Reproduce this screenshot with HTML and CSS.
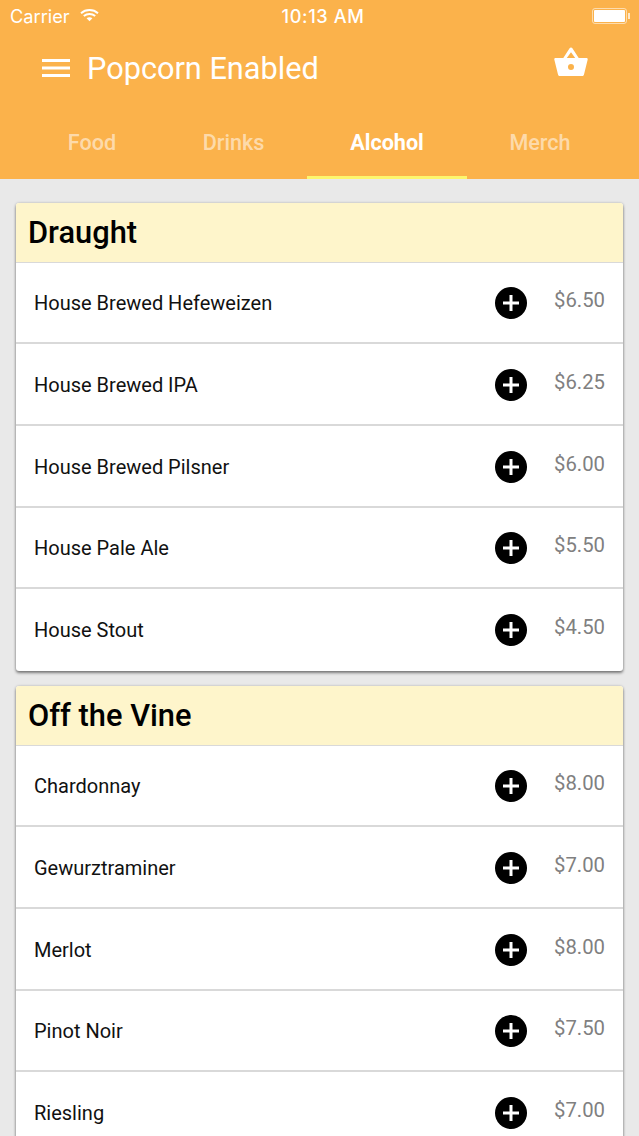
FILE: index.html
```html
<!DOCTYPE html>
<html lang="en">
<head>
<meta charset="utf-8">
<title>Popcorn Enabled</title>
<link rel="stylesheet" href="styles.css">
</head>
<body>
<div class="screen">
  <header class="top">
    <div class="status">
      <div class="status-left">
        <span>Carrier</span>
        <svg class="wifi" width="19" height="14" viewBox="0 0 19 14"><path fill="none" stroke="#fff" stroke-width="2" d="M1 5.200C5.800.9 13.200.9 18 5.200M3.800 8C7 5.300 12 5.300 15.200 8"/><path fill="#fff" d="M6.600 10.300c1.700-1.300 4.100-1.300 5.800 0L9.500 13.300z"/></svg>
      </div>
      <span class="clock">10:13 AM</span>
      <div class="battery"><span class="battery-body"><span class="battery-fill"></span></span><span class="battery-tip"></span></div>
    </div>
    <div class="toolbar">
      <div class="toolbar-left">
        <svg class="menu" width="28" height="18" viewBox="0 0 28 18"><path fill="#fff" d="M0 0h28v3H0zM0 7.500h28v3H0zM0 15h28v3H0z"/></svg>
        <h1 class="title">Popcorn Enabled</h1>
      </div>
      <svg class="basket" width="34" height="30" viewBox="0 0 34 30"><path fill="#fff" fill-rule="evenodd" d="M17 0.500c.6 0 1.100.3 1.400.8L24.700 11H32.500c.8 0 1.400.7 1.200 1.500L30 27.500c-.3 1-1.100 1.500-2 1.500H6c-.9 0-1.700-.5-2-1.500L.3 12.500C.1 11.700.7 11 1.500 11H9.300L15.600 1.300c.3-.5.800-.8 1.400-.8zM17 5.300 12.800 11h8.400zM17 17a3 3 0 1 0 0 6 3 3 0 0 0 0-6z"/></svg>
    </div>
    <nav class="tabs">
      <a class="tab tab-food">Food</a>
      <a class="tab tab-drinks">Drinks</a>
      <a class="tab tab-alcohol active">Alcohol</a>
      <a class="tab tab-merch">Merch</a>
    </nav>
  </header>
  <main class="content">
    <section class="card">
      <h2 class="card-title">Draught</h2>
      <div class="row"><span class="name">House Brewed Hefeweizen</span><span class="add"></span><span class="price">$6.50</span></div>
      <div class="row"><span class="name">House Brewed IPA</span><span class="add"></span><span class="price">$6.25</span></div>
      <div class="row"><span class="name">House Brewed Pilsner</span><span class="add"></span><span class="price">$6.00</span></div>
      <div class="row"><span class="name">House Pale Ale</span><span class="add"></span><span class="price">$5.50</span></div>
      <div class="row"><span class="name">House Stout</span><span class="add"></span><span class="price">$4.50</span></div>
    </section>
    <section class="card">
      <h2 class="card-title">Off the Vine</h2>
      <div class="row"><span class="name">Chardonnay</span><span class="add"></span><span class="price">$8.00</span></div>
      <div class="row"><span class="name">Gewurztraminer</span><span class="add"></span><span class="price">$7.00</span></div>
      <div class="row"><span class="name">Merlot</span><span class="add"></span><span class="price">$8.00</span></div>
      <div class="row"><span class="name">Pinot Noir</span><span class="add"></span><span class="price">$7.50</span></div>
      <div class="row"><span class="name">Riesling</span><span class="add"></span><span class="price">$7.00</span></div>
    </section>
  </main>
</div>
</body>
</html>
```

FILE: styles.css
```css
* { box-sizing: border-box; }
html, body { margin: 0; padding: 0; }
body { font-family: Roboto, sans-serif; background: #e9e9e9; }
.screen { width: 639px; height: 1136px; overflow: hidden; background: #e9e9e9; }

.top { height: 179px; background: #fbb24b; color: #fff; }

.status { height: 33px; padding: 0 9px 2px 10px; display: flex; align-items: center; justify-content: space-between; position: relative; font-size: 18.2px; font-family: Inter, sans-serif; }
.status-left { display: flex; align-items: center; gap: 10px; }
.wifi { margin-top: -2px; }
.clock { position: absolute; left: 7px; right: 0; text-align: center; font-weight: 500; letter-spacing: .6px; }
.battery { display: flex; align-items: center; }
.battery-body { width: 35px; height: 16px; border: 1px solid rgba(255,255,255,.55); border-radius: 3px; padding: 1px; display: block; }
.battery-fill { display: block; height: 100%; background: #fff; border-radius: 1px; }
.battery-tip { width: 2px; height: 6px; background: rgba(255,255,255,.7); margin-left: 1px; }

.toolbar { height: 70px; padding: 0 51px 0 42px; display: flex; align-items: center; justify-content: space-between; }
.toolbar-left { display: flex; align-items: center; gap: 17px; }
.title { margin: 2px 0 0; font-size: 30.7px; font-weight: 400; line-height: 36px; }
.basket { margin-top: -12px; }

.tabs { height: 76px; padding-left: 24px; display: grid; grid-template-columns: 136px 147px 160px 146px; }
.tab { display: flex; justify-content: center; align-items: center; padding-top: 5px; font-size: 21.6px; font-weight: 500; color: rgba(255,255,255,.55); border-bottom: 3px solid transparent; }
.tab.active { color: #fff; font-weight: 700; border-bottom-color: #fdf66d; }

.content { padding: 23.5px 16px 0; display: flex; flex-direction: column; gap: 14.6px; }
.card { background: #fff; border-radius: 3px; box-shadow: 0 2px 3px rgba(0,0,0,.45), 0 0 3px rgba(0,0,0,.2); }
.card-title { margin: 0; height: 60px; padding: 1px 0 0 12px; display: flex; align-items: center; background: #fef5cb; border-radius: 3px 3px 0 0; border-bottom: 1px solid #d9d9d9; font-size: 30.8px; font-weight: 500; color: #000; }
.row { height: 81.7px; padding: 2px 18px 0; display: flex; align-items: center; border-bottom: 2px solid #d9d9d9; }
.row:last-child { border-bottom-color: transparent; }
.name { flex: 1; font-size: 20px; color: #111; }
.add { width: 32px; height: 32px; border-radius: 50%; background: #000; margin-right: 27px; position: relative; }
.add::before, .add::after { content: ""; position: absolute; background: #fff; left: 50%; top: 50%; transform: translate(-50%,-50%); }
.add::before { width: 16px; height: 3px; }
.add::after { width: 3px; height: 16px; }
.price { width: 50px; margin-right: 1px; font-size: 20.3px; color: #808080; margin-top: -6px; text-align: right; white-space: nowrap; }
```
